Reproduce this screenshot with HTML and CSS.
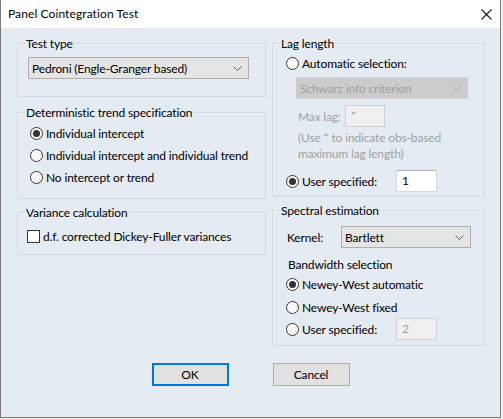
FILE: index.html
```html
<!DOCTYPE html>
<html>
<head>
<meta charset="utf-8">
<link rel="stylesheet" href="styles.css">
</head>
<body>
<div class="window">
  <div class="titlebar">
    <span class="title">Panel Cointegration Test</span>
    <svg class="close" width="11" height="11" viewBox="0 0 11 11"><path d="M0.5 0.5L10.5 10.5M10.5 0.5L0.5 10.5" stroke="#1a1a1a" stroke-width="1.1" fill="none"/></svg>
  </div>
  <div class="client">
    <div class="columns">
      <div class="col col-left">
        <div class="group g-test">
          <div class="glabel">Test type</div>
          <div class="combo combo-test"><span>Pedroni (Engle-Granger based)</span><svg class="chev" width="9" height="5" viewBox="0 0 9 5"><path d="M0.5 0.5L4.5 4.5L8.5 0.5" fill="none" stroke="#606060"/></svg></div>
        </div>
        <div class="group g-trend">
          <div class="glabel">Deterministic trend specification</div>
          <div class="row rrow-left first"><span class="radio on"></span><span>Individual intercept</span></div>
          <div class="row rrow-left"><span class="radio"></span><span>Individual intercept and individual trend</span></div>
          <div class="row rrow-left"><span class="radio"></span><span>No intercept or trend</span></div>
        </div>
        <div class="group g-var">
          <div class="glabel">Variance calculation</div>
          <div class="row crow"><span class="check"></span><span>d.f. corrected Dickey-Fuller variances</span></div>
        </div>
      </div>
      <div class="col col-right">
        <div class="group g-lag">
          <div class="glabel">Lag length</div>
          <div class="row rrow-right"><span class="radio"></span><span>Automatic selection:</span></div>
          <div class="combo combo-dis combo-schwarz"><span>Schwarz info criterion</span><svg class="chev" width="9" height="5" viewBox="0 0 9 5"><path d="M0.5 0.5L4.5 4.5L8.5 0.5" fill="none" stroke="#a8a8a8"/></svg></div>
          <div class="row maxlag"><span class="dis maxlbl">Max lag:</span><span class="edit edit-dis edit-max">*</span></div>
          <div class="help dis">(Use * to indicate obs-based<br>maximum lag length)</div>
          <div class="row rrow-right user1"><span class="radio on"></span><span class="ulbl">User specified:</span><span class="edit edit-num">1</span></div>
        </div>
        <div class="group g-spec">
          <div class="glabel">Spectral estimation</div>
          <div class="row kernel"><span class="klbl">Kernel:</span><div class="combo combo-kernel"><span>Bartlett</span><svg class="chev" width="9" height="5" viewBox="0 0 9 5"><path d="M0.5 0.5L4.5 4.5L8.5 0.5" fill="none" stroke="#606060"/></svg></div></div>
          <div class="bwlbl">Bandwidth selection</div>
          <div class="row rrow-right bw1"><span class="radio on"></span><span>Newey-West automatic</span></div>
          <div class="row rrow-right bw2"><span class="radio"></span><span>Newey-West fixed</span></div>
          <div class="row rrow-right bw3"><span class="radio"></span><span class="ulbl">User specified:</span><span class="edit edit-dis edit-num">2</span></div>
        </div>
      </div>
    </div>
    <div class="buttons">
      <div class="btn btn-default">OK</div>
      <div class="btn">Cancel</div>
    </div>
  </div>
</div>
</body>
</html>
```
FILE: styles.css
```css
html, body {
  margin: 0;
  padding: 0;
  background: #f0f0f0;
}
body {
  font-family: Lato, "Noto Sans", "Liberation Sans", sans-serif;
  font-size: 12px;
  color: #000;
  width: 503px;
  height: 419px;
  overflow: hidden;
}
.window {
  width: 501px;
  height: 418px;
  box-sizing: border-box;
  border: 1px solid #7a7a7a;
  border-top: none;
  display: flex;
  flex-direction: column;
}
.titlebar {
  height: 28px;
  flex: none;
  background: #fff;
  display: flex;
  align-items: center;
  padding-left: 7px;
  padding-right: 8px;
}
.title {
  font-size: 12px;
  line-height: 16px;
  letter-spacing: 0.1px;
}
.close {
  margin-left: auto;
}
.client {
  flex: 1;
  background: #e5ebf3;
  letter-spacing: -0.15px;
}
.columns {
  display: flex;
  gap: 6px;
  padding: 15px 0 0 16px;
  align-items: flex-start;
}
.col {
  display: flex;
  flex-direction: column;
}
.col-left { width: 249px; }
.col-right { width: 213px; }
.group {
  box-sizing: border-box;
  border: 1px solid #d3d9e1;
  box-shadow: inset 1px 1px 0 #eef2f7;
}
.glabel {
  width: fit-content;
  margin: -8px 0 0 7px;
  padding: 0 1px;
  height: 16px;
  line-height: 16px;
  background: #e5ebf3;
}
.g-test { height: 54px; }
.g-trend { height: 87px; margin-top: 15px; }
.g-var { height: 43px; margin-top: 13px; }
.g-lag { height: 154px; }
.g-spec { height: 136px; margin-top: 13px; }

.row {
  display: flex;
  align-items: center;
  height: 22px;
}
.rrow-left { padding-left: 12px; }
.rrow-left.first { margin-top: 1px; }
.rrow-right { padding-left: 13px; }
.crow { padding-left: 9px; margin-top: 4px; }

.radio {
  width: 13px;
  height: 13px;
  box-sizing: border-box;
  border: 1px solid #333;
  border-radius: 50%;
  background: #fff;
  margin-right: 3px;
  flex: none;
  display: flex;
  align-items: center;
  justify-content: center;
}
.radio.on::after {
  content: "";
  width: 7px;
  height: 7px;
  border-radius: 50%;
  background: #333;
}
.check {
  width: 13px;
  height: 13px;
  box-sizing: border-box;
  border: 1px solid #333;
  background: #fff;
  margin-right: 3px;
  flex: none;
}

.combo {
  box-sizing: border-box;
  height: 22px;
  border: 1px solid #adadad;
  background: #e5e5e5;
  display: flex;
  align-items: center;
  justify-content: space-between;
  padding: 0 6px 0 3px;
  flex: none;
}
.combo-test { margin: 5px 0 0 10px; width: 221px; }
.combo-dis {
  background: #cccccc;
  border-color: #cccccc;
  color: #a0a0a0;
}
.combo-schwarz { margin: 3px 0 0 23px; width: 172px; }
.combo-kernel { width: 130px; }

.dis { color: #a0a0a0; }
.maxlag { margin: 6px 0 0 25px; }
.maxlbl { width: 47px; }
.edit {
  box-sizing: border-box;
  height: 22px;
  border: 1px solid #d9d9d9;
  border-top-color: #b4b4b4;
  background: #fff;
  padding-left: 5px;
  line-height: 20px;
  flex: none;
}
.edit-dis {
  background: #f0f0f0;
  border-color: #cfcfcf;
  color: #a0a0a0;
}
.edit-max { width: 40px; }
.edit-num { width: 41px; }
.help {
  margin: 3px 0 0 25px;
  line-height: 16px;
}
.user1 { margin-top: 8px; }
.ulbl { width: 94px; }

.kernel { margin: 7px 0 0 14px; }
.klbl { width: 54px; }
.bwlbl {
  margin: 9px 0 0 15px;
  line-height: 16px;
}
.bw2 { margin-top: 1px; }

.buttons {
  display: flex;
  justify-content: center;
  gap: 44px;
  margin-top: 17px;
}
.btn {
  box-sizing: border-box;
  width: 77px;
  height: 23px;
  border: 1px solid #adadad;
  background: #e1e1e1;
  display: flex;
  align-items: center;
  justify-content: center;
}
.btn-default {
  border: 2px solid #0078d7;
}
```
